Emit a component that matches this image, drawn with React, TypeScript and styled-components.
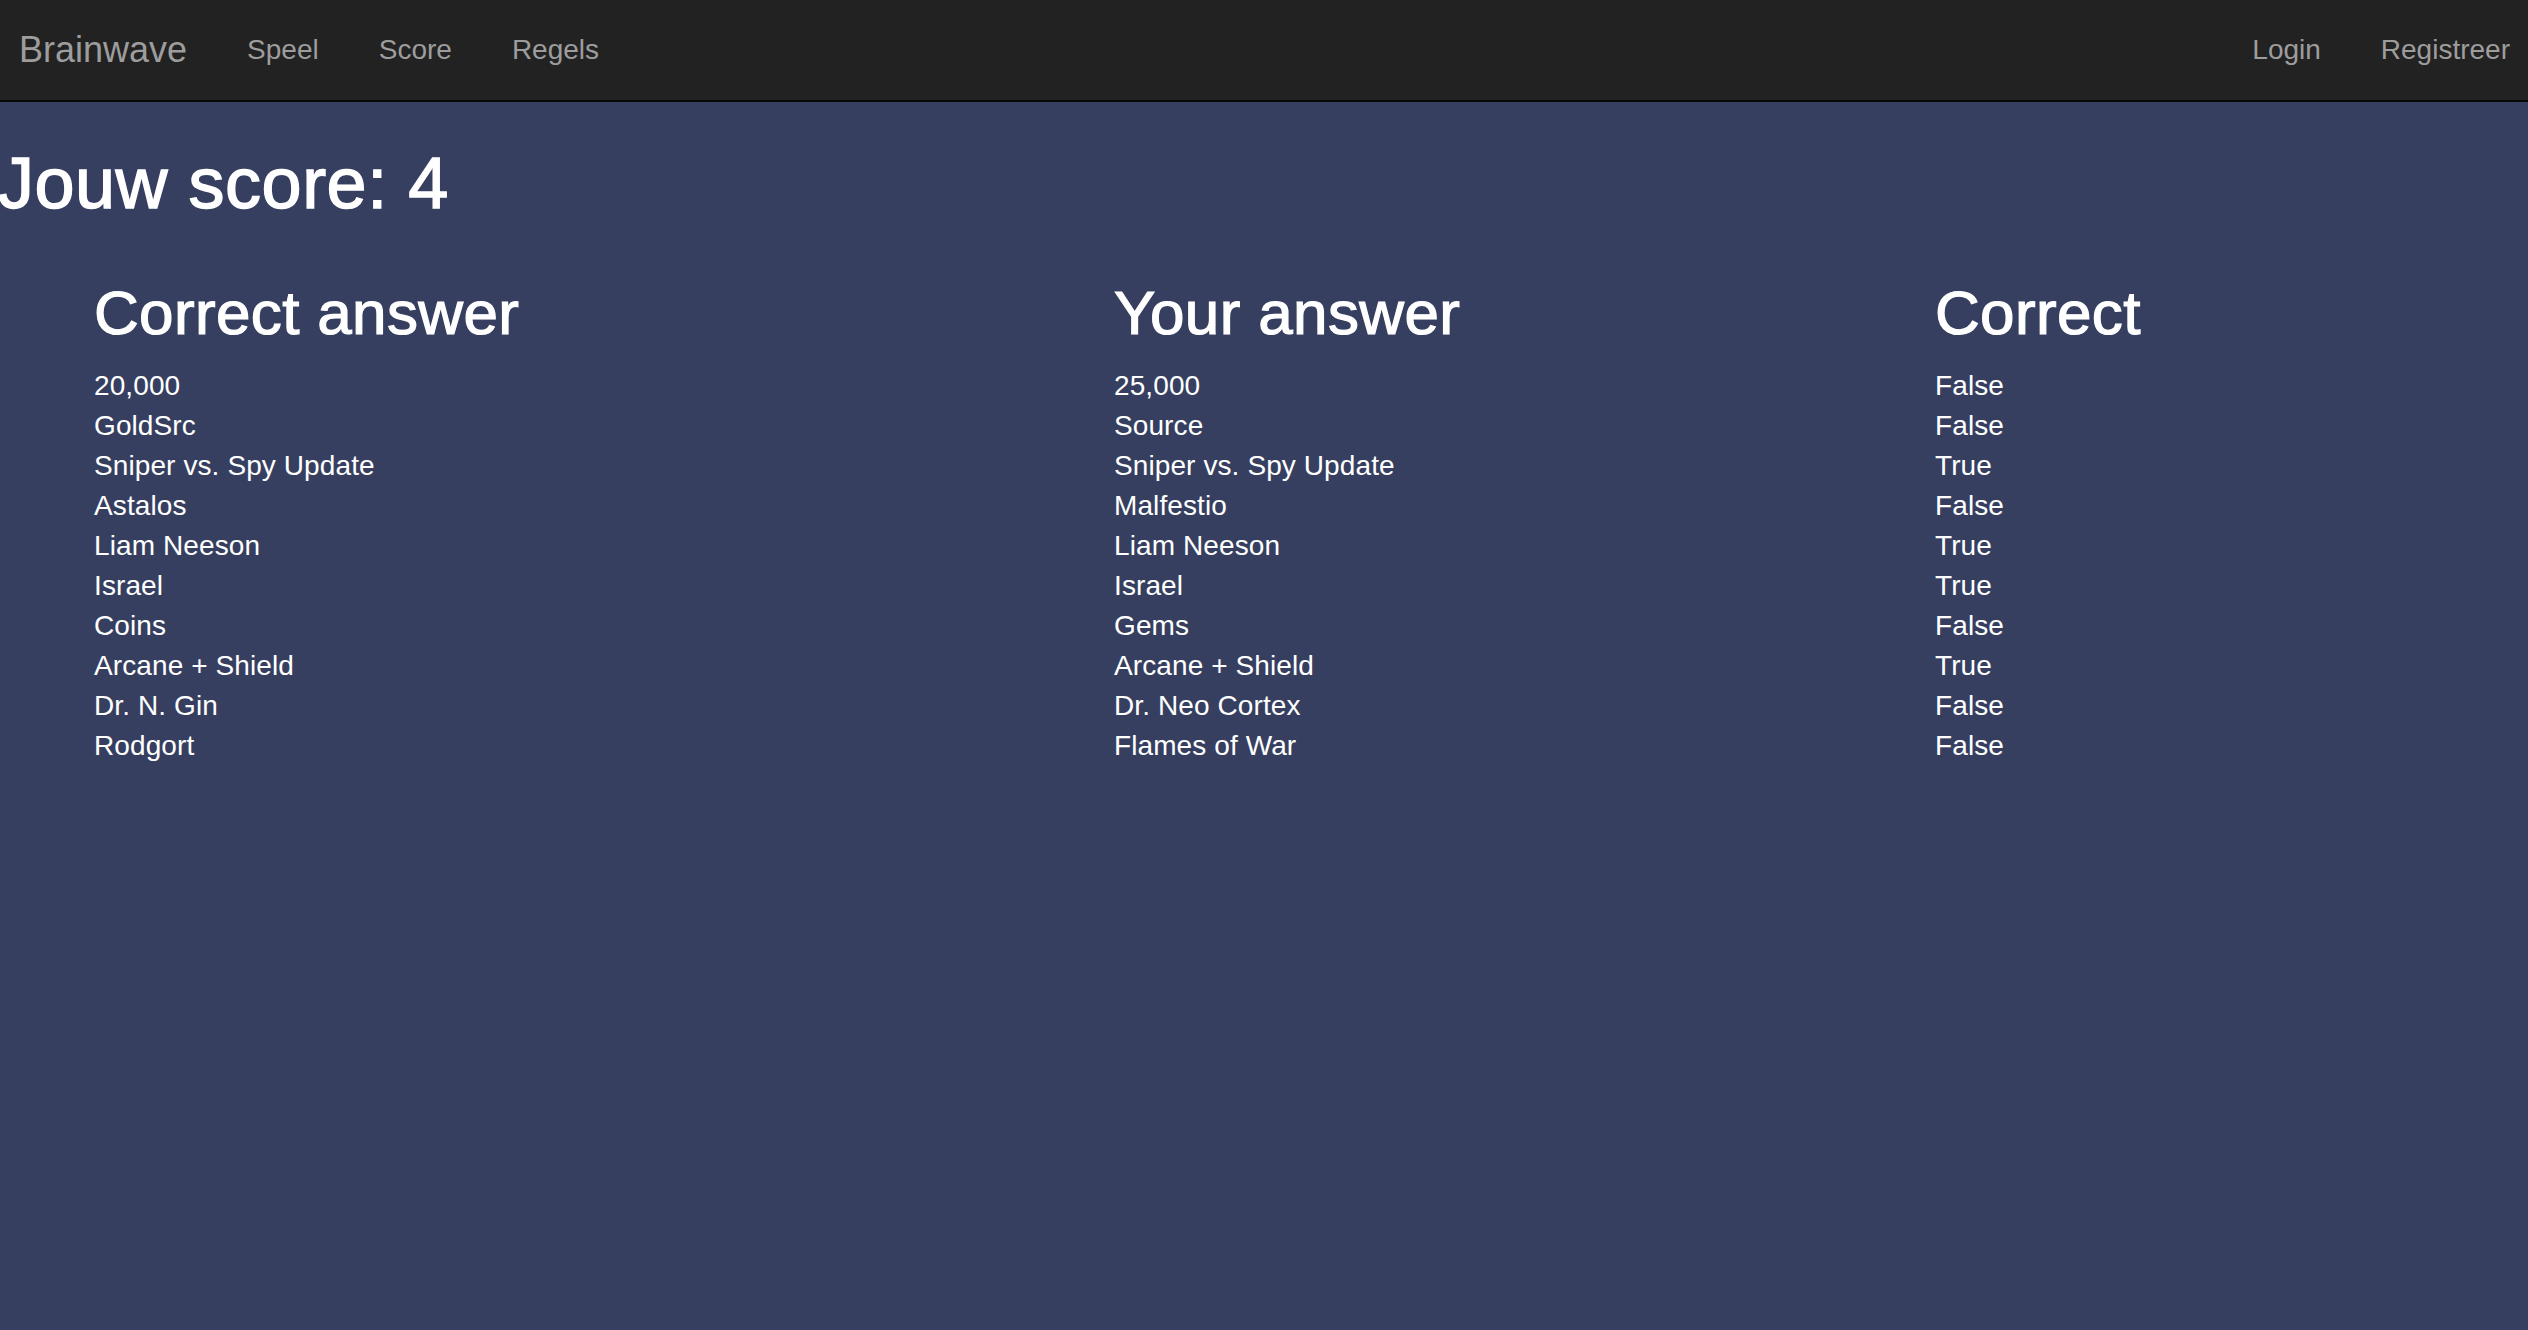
import React from "react";
import styled, { createGlobalStyle } from "styled-components";

const GlobalStyle = createGlobalStyle`
  html, body {
    margin: 0;
    padding: 0;
    background: #363f60;
    min-height: 100%;
  }
  body {
    font-family: "Liberation Sans", Arial, Helvetica, sans-serif;
    font-size: 28px;
    line-height: 40px;
    color: #fff;
    overflow: hidden;
  }
  #root {
    min-height: 1330px;
  }
`;

const Navbar = styled.nav`
  display: flex;
  justify-content: space-between;
  height: 100px;
  background: #222222;
  border-bottom: 2px solid #080808;
`;

const NavGroup = styled.ul<{ right?: boolean }>`
  display: flex;
  list-style: none;
  margin: 0 ${(p) => (p.right ? "-12px" : "0")} 0 0;
  padding: 0;
`;

const Brand = styled.a`
  display: block;
  padding: 30px 30px 30px 19px;
  font-size: 36px;
  line-height: 40px;
  color: #9d9d9d;
  text-decoration: none;
`;

const NavLink = styled.a`
  display: block;
  padding: 30px;
  font-size: 28px;
  line-height: 40px;
  color: #9d9d9d;
  text-decoration: none;
`;

const Main = styled.main`
  padding-top: 41px;
`;

const Title = styled.h1`
  margin: 0 0 0 -2px;
  font-size: 72px;
  line-height: 80px;
  font-weight: 500;
  letter-spacing: 0.5px;
  -webkit-text-stroke: 1.4px #fff;
`;

const Results = styled.div`
  display: grid;
  grid-template-columns: 1020px 821px 1fr;
  padding-left: 94px;
  margin-top: 56px;
`;

const Column = styled.section``;

const Heading = styled.h2`
  margin: 0 0 19px;
  font-size: 62px;
  line-height: 68px;
  font-weight: 500;
  letter-spacing: 0.35px;
  -webkit-text-stroke: 1.2px #fff;
`;

const Item = styled.div`
  font-size: 28px;
  line-height: 40px;
  letter-spacing: 0.1px;
`;

const correctAnswers = [
  "20,000",
  "GoldSrc",
  "Sniper vs. Spy Update",
  "Astalos",
  "Liam Neeson",
  "Israel",
  "Coins",
  "Arcane + Shield",
  "Dr. N. Gin",
  "Rodgort",
];

const yourAnswers = [
  "25,000",
  "Source",
  "Sniper vs. Spy Update",
  "Malfestio",
  "Liam Neeson",
  "Israel",
  "Gems",
  "Arcane + Shield",
  "Dr. Neo Cortex",
  "Flames of War",
];

const results = correctAnswers.map((a, i) => (a === yourAnswers[i] ? "True" : "False"));

const columns = [
  { title: "Correct answer", rows: correctAnswers },
  { title: "Your answer", rows: yourAnswers },
  { title: "Correct", rows: results },
];

export default function App() {
  const score = results.filter((r) => r === "True").length;
  return (
    <>
      <GlobalStyle />
      <Navbar>
        <NavGroup>
          <li>
            <Brand href="#">Brainwave</Brand>
          </li>
          <li>
            <NavLink href="#">Speel</NavLink>
          </li>
          <li>
            <NavLink href="#">Score</NavLink>
          </li>
          <li>
            <NavLink href="#">Regels</NavLink>
          </li>
        </NavGroup>
        <NavGroup right>
          <li>
            <NavLink href="#">Login</NavLink>
          </li>
          <li>
            <NavLink href="#">Registreer</NavLink>
          </li>
        </NavGroup>
      </Navbar>
      <Main>
        <Title>Jouw score: {score}</Title>
        <Results>
          {columns.map((col) => (
            <Column key={col.title}>
              <Heading>{col.title}</Heading>
              {col.rows.map((row, i) => (
                <Item key={i}>{row}</Item>
              ))}
            </Column>
          ))}
        </Results>
      </Main>
    </>
  );
}
